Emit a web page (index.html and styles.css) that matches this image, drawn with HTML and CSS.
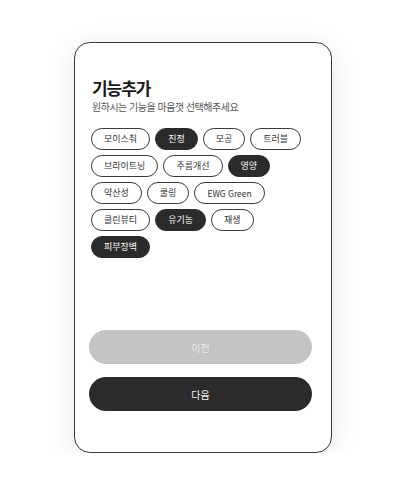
FILE: index.html
```html
<!DOCTYPE html>
<html lang="ko">
<head>
<meta charset="utf-8">
<link rel="stylesheet" href="styles.css">
</head>
<body>
<div class="card">
  <h1 class="title">기능추가</h1>
  <p class="subtitle">원하시는 기능을 마음껏 선택해주세요</p>
  <div class="chips">
    <span class="chip">모이스춰</span>
    <span class="chip on">진정</span>
    <span class="chip">모공</span>
    <span class="chip">트러블</span>
    <span class="chip">브라이트닝</span>
    <span class="chip">주름개선</span>
    <span class="chip on">영양</span>
    <span class="chip">약산성</span>
    <span class="chip">쿨링</span>
    <span class="chip latin">EWG Green</span>
    <span class="chip">클린뷰티</span>
    <span class="chip on">유기농</span>
    <span class="chip">재생</span>
    <span class="chip on">피부장벽</span>
  </div>
  <div class="actions">
    <button class="btn prev">이전</button>
    <button class="btn next">다음</button>
  </div>
</div>
</body>
</html>
```
FILE: styles.css
```css
html, body {
  margin: 0;
  padding: 0;
  background: #ffffff;
}
body {
  font-family: "Noto Sans CJK KR", "Noto Sans", sans-serif;
  color: #222;
  padding: 42px 0 0 74px;
}
.card {
  box-sizing: border-box;
  width: 258px;
  height: 411px;
  border: 1.5px solid #3a3a3a;
  border-radius: 16px;
  background: #fff;
  box-shadow: 0 4px 28px rgba(0, 0, 0, 0.1);
  padding: 35px 19px 41px 14px;
  display: flex;
  flex-direction: column;
}
.title {
  margin: 0 0 0 3px;
  font-size: 17px;
  line-height: 20px;
  font-weight: 700;
  letter-spacing: -0.06em;
  color: #1a1a1a;
}
.subtitle {
  margin: 3px 0 0 3px;
  font-size: 10px;
  line-height: 12px;
  letter-spacing: -0.05em;
  color: #555;
}
.chips {
  margin: 15px 0 0 2px;
  display: flex;
  flex-wrap: wrap;
  gap: 5px;
}
.chip {
  box-sizing: border-box;
  height: 22px;
  padding: 0 12px;
  border: 1px solid #3a3a3a;
  border-radius: 11px;
  font-size: 9px;
  line-height: 20px;
  font-weight: 400;
  color: #333;
  background: #fff;
  white-space: nowrap;
}
.chip.latin {
  font-size: 8.5px;
  padding: 0 12px;
}
.chip.on {
  background: #2b2b2b;
  border-color: #2b2b2b;
  color: #fff;
}
.actions {
  margin-top: auto;
  display: flex;
  flex-direction: column;
  gap: 13px;
}
.btn {
  height: 34px;
  border: none;
  border-radius: 17px;
  font-family: inherit;
  font-size: 10px;
  color: #fff;
  cursor: pointer;
}
.btn.prev {
  background: #c4c4c4;
  color: #ececec;
}
.btn.next {
  background: #2b2b2b;
  color: #f2f2f2;
}
```
